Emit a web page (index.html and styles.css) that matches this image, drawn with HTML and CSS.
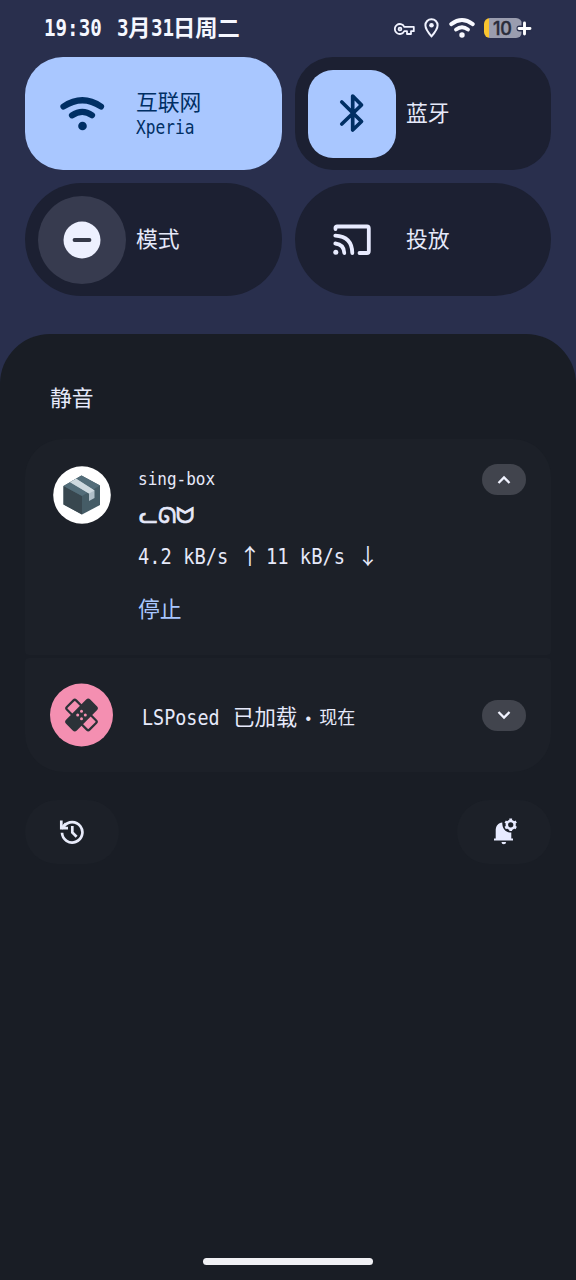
FILE: index.html
```html
<!DOCTYPE html>
<html lang="zh-CN">
<head>
<meta charset="utf-8">
<title>通知栏</title>
<link rel="stylesheet" href="styles.css">
</head>
<body>
<div class="screen">
  <header class="status">
    <div class="clock"><span class="mono n5">19:30</span><span class="date"><span class="mono n1">3</span>月<span class="mono n2">31</span>日周二</span></div>
    <div class="status-icons">
      <svg class="key" width="21" height="14" viewBox="0 0 21 14" fill="none" stroke="#f1f3ff" stroke-width="1.8" stroke-linejoin="round"><path d="M10.3 4.8A5 5 0 1 0 10.3 9.2H13v2.8h4V9.2h2.8V4.8Z"/><circle cx="6" cy="7" r="1.4"/></svg>
      <svg class="pin" width="15" height="20" viewBox="0 0 15 20"><path d="M7.5 1.2A6 6 0 0 0 1.4 7.3C1.4 11.5 7.5 18.3 7.5 18.3S13.6 11.5 13.6 7.3A6 6 0 0 0 7.5 1.2Z" fill="none" stroke="#f1f3ff" stroke-width="2"/><circle cx="7.5" cy="7.2" r="2.3" fill="#f1f3ff"/></svg>
      <svg class="wifi-small" width="26" height="20" viewBox="0 0 46 35"><g fill="none" stroke="#f8f9ff" stroke-width="7" stroke-linecap="round"><path d="M4 10.500Q23-3.500 42 10.500"/><path d="M12.500 20.200Q23 12.500 33.500 20.200"/></g><circle cx="23" cy="30" r="4.800" fill="#f8f9ff"/></svg>
      <div class="battery"><span class="level">10</span>
        <svg class="plus" width="17" height="17" viewBox="0 0 17 17" fill="none" stroke-linecap="round"><path d="M8.500 3.500v10M3.500 8.500h10" stroke="#292f4c" stroke-width="6"/><path d="M8.500 3v11M3 8.500h11" stroke="#fff" stroke-width="2.900"/></svg>
      </div>
    </div>
  </header>

  <section class="tiles">
    <div class="tile on">
      <div class="tile-icon"><svg width="46" height="35" viewBox="0 0 46 35"><g fill="none" stroke="#002f64" stroke-width="6.200" stroke-linecap="round"><path d="M4.500 10.500Q23.500-2 42 10.500"/><path d="M13 19.300Q23.500 12.500 33 19.300"/></g><circle cx="23.500" cy="30" r="4.300" fill="#002f64"/></svg></div>
      <div class="label two"><div>互联网</div><div class="sub"><span class="mono">Xperia</span></div></div>
    </div>
    <div class="tile">
      <div class="tile-icon lit"><svg width="26" height="40" viewBox="0 0 26 40" fill="none" stroke="#002f64" stroke-width="3.700" stroke-linejoin="round" stroke-linecap="round"><path d="M2.800 8 22.500 27.500 13.700 36V2L22.500 11 2.800 30"/></svg></div>
      <div class="label">蓝牙</div>
    </div>
    <div class="tile round">
      <div class="tile-icon dim"><svg width="38" height="38" viewBox="0 0 38 38"><circle cx="19" cy="19" r="18.500" fill="#edf0ff"/><path d="M11.500 19h15" stroke="#343849" stroke-width="3.800" stroke-linecap="round"/></svg></div>
      <div class="label">模式</div>
    </div>
    <div class="tile round">
      <div class="tile-icon"><svg width="38" height="32" viewBox="0 0 38 32" fill="none" stroke="#e8ebff" stroke-width="3.800" stroke-linecap="round" stroke-linejoin="round"><path d="M2.500 5V3.500Q2.500 2.500 4 2.500H34Q35.800 2.500 35.800 4.500V27Q35.800 29 34 29H26.500"/><path d="M2.300 11.700Q19 12.500 19.300 29M2.300 19.500Q11 20.500 11.300 29"/><circle cx="2.800" cy="28.300" r="2.500" fill="#e8ebff" stroke="none"/></svg></div>
      <div class="label">投放</div>
    </div>
  </section>

  <main class="shade">
    <h2>静音</h2>
    <article class="card first">
      <svg class="avatar" width="58" height="58" viewBox="0 0 58 58"><circle cx="29" cy="29" r="28.800" fill="#fff"/><path d="M10.500 20 28.500 9.500 47 19.500V39L29 48.500 10.500 38.500Z" fill="#455c66"/><path d="M10.500 20 29 30V48.500L10.500 38.500Z" fill="#38474f"/><path d="M10.500 20 28.500 9.500 47 19.500 29 30Z" fill="#536d79"/><path d="M17.200 16.200 23.200 12.700 41.500 24.500V32L36 35V27.500Z" fill="#b0bfc8"/><path d="M17.200 16.200 23.200 12.700 41.500 24.500 36 27.500Z" fill="#ced9df"/></svg>
      <div class="body">
        <div class="app"><span class="mono">sing-box</span></div>
        <div class="cat"><span>ᓚᘏᗢ</span></div>
        <div class="rate"><span class="mono n9">4.2 kB/s </span><span class="arrow">↑</span><span class="mono n8">11 kB/s </span><span class="arrow">↓</span></div>
        <div class="action">停止</div>
      </div>
      <div class="chevron"><svg width="14" height="10" viewBox="0 0 14 10"><path d="M1.500 8 7 2.500 12.500 8" fill="none" stroke="#f1f3ff" stroke-width="2.300"/></svg></div>
    </article>
    <article class="card second">
      <svg class="avatar" width="64" height="64" viewBox="0 0 64 64"><circle cx="31.500" cy="32" r="31.500" fill="#f48fb1"/><g transform="translate(31.500 32)" stroke="#2c3238" stroke-width="2.200"><rect x="-16" y="-6.500" width="32" height="13" rx="1.800" transform="rotate(45)" fill="#f48fb1"/><rect x="-16" y="-6.500" width="32" height="13" rx="1.800" transform="rotate(-45)" fill="#2c3238"/></g><g fill="#f48fb1"><circle cx="31.500" cy="28.200" r="1.500"/><circle cx="27.700" cy="32" r="1.500"/><circle cx="35.300" cy="32" r="1.500"/><circle cx="31.500" cy="35.800" r="1.500"/></g></svg>
      <div class="line"><span class="mono n8">LSPosed </span>已加载<span class="when"><span class="dot">•</span>现在</span></div>
      <div class="chevron"><svg width="14" height="10" viewBox="0 0 14 10"><path d="M1.500 2 7 7.500 12.500 2" fill="none" stroke="#f1f3ff" stroke-width="2.300"/></svg></div>
    </article>
    <footer class="actions">
      <div class="pill"><svg width="26" height="26" viewBox="0 0 26 26" fill="none" stroke="#e8ebfa" stroke-width="2.700"><path d="M3 13.800A10.200 10.200 0 1 0 5 7.200"/><path d="M2.300 1.500v7.700H9"/><path d="M2.300 9.500 7 4.500"/><path d="M13.300 7v6.500l4.300 4.300"/></svg></div>
      <div class="pill"><svg width="26" height="28" viewBox="0 0 26 28" fill="#e8ebff"><path d="M3 20.500H4.700V12.500C4.700 8 7.200 4.800 11.300 4.500 11 10.500 14.500 14.500 20.300 14.600V20.500H22V22.500H3Z"/><path d="M10.500 24h4.600a2.300 2.300 0 0 1-4.600 0Z"/><circle cx="19.700" cy="6.800" r="3.900" fill="none" stroke="#e8ebff" stroke-width="2.500"/><path d="M19.700.5v2M19.700 11.100v2M14.200 3.600l1.800 1M23.400 9l1.800 1M14.200 10l1.800-1M23.400 4.600l1.800-1" stroke="#e8ebff" stroke-width="2.800"/></svg></div>
    </footer>
    <div class="home-bar"></div>
  </main>
</div>
</body>
</html>
```
FILE: styles.css
```css
* { box-sizing: border-box; }
body { margin: 0; background: #191d25; }
svg { display: block; flex: none; }

.screen {
  width: 576px;
  height: 1280px;
  display: flex;
  flex-direction: column;
  overflow: hidden;
  background: #292f4d;
  color: #e6e9fa;
  font-family: "Liberation Sans", "Noto Sans CJK SC", sans-serif;
  font-size: 21.8px;
  line-height: 30px;
  white-space: nowrap;
}

/* Half-width Latin text set to half of a Chinese character */
.mono {
  display: inline-block;
  font-family: "DejaVu Sans Mono", monospace;
  font-size: 1em;
  white-space: pre;
  transform: scaleX(.86);
  transform-origin: 0 50%;
}
.n1 { width: 11.2px; }
.n2 { width: 22.4px; }
.n5 { width: 73px; }
.n8 { width: 91px; }
.n9 { width: 101px; }

/* Status bar */
.status {
  height: 57px;
  padding: 0 43px 0 44px;
  display: flex;
  align-items: center;
  justify-content: space-between;
  color: #f5f7ff;
}
.clock { display: flex; font-weight: 700; font-size: 22.3px; }
.clock .mono { font-size: 22.3px; }
.status-icons { display: flex; align-items: center; padding-bottom: 1px; }
.key { margin: 1px 9px 0 0; }
.pin { margin-right: 10px; }
.wifi-small { margin-right: 9px; }
.battery {
  position: relative;
  width: 38px;
  height: 20px;
  margin-right: 11px;
  border-radius: 6px;
  background: linear-gradient(90deg, #f9c52f 5px, #9a9daf 5px);
}
.level {
  display: block;
  padding-left: 9px;
  color: #292c3a;
  font: 500 18px/21px Inter, sans-serif;
  letter-spacing: -.2px;
  -webkit-text-stroke: .4px #292c3a;
}
.plus { position: absolute; left: 32px; top: 2px; }

/* Quick settings */
.tiles {
  display: grid;
  grid-template-columns: 257px 256px;
  grid-auto-rows: 113px;
  gap: 13px;
  padding: 0 25px;
  height: 277px;
}
.tile {
  display: flex;
  align-items: center;
  padding-left: 13px;
  border-radius: 38px;
  background: #1c2032;
}
.tile.round { border-radius: 57px; }
.tile.on { background: #a9c7ff; color: #002f64; }
.tile-icon {
  width: 88px;
  height: 88px;
  margin-right: 10px;
  display: flex;
  align-items: center;
  justify-content: center;
}
.lit { border-radius: 25px; background: #a9c7ff; }
.dim { border-radius: 50%; background: #373b4f; }
.label { padding-top: 1px; }
.two { line-height: 25px; padding-top: 2px; }
.sub { font-size: 18.6px; line-height: 25px; }

/* Notification shade */
.shade {
  flex: 1;
  display: flex;
  flex-direction: column;
  padding: 0 25px;
  border-radius: 50px 50px 0 0;
  background: #191d25;
}
h2 { margin: 50px 0 25px 25px; font-size: 21.8px; line-height: 30px; font-weight: 400; }
.card { display: flex; background: #1c2028; padding-right: 25px; }
.first { height: 216px; padding-top: 25px; padding-left: 28px; border-radius: 38px 38px 4px 4px; }
.second { height: 114px; margin-top: 3px; padding-left: 25px; align-items: center; border-radius: 4px 4px 38px 38px; }
.first .avatar { margin: 2px 27px 0 0; }
.second .avatar { margin-right: 28px; }
.body { flex: 1; }
.app { font-size: 18px; line-height: 29px; }
.app .mono { transform: scaleX(.89); }
.sub .mono { transform: scaleX(.87); }
.cat {
  height: 40px;
  padding: 2px 0 0 1px;
  font: 400 22px/40px "DejaVu Sans", sans-serif;
  -webkit-text-stroke: .7px #e6e9fa;
}
.rate { display: flex; height: 36px; line-height: 36px; padding-top: 5px; }
.arrow { width: 27px; line-height: 32px; text-indent: 0; font-family: "Noto Sans CJK SC", sans-serif; }
.action { margin-top: 25px; color: #a9c7ff; line-height: 30px; }
.chevron {
  width: 44px;
  height: 31px;
  border-radius: 16px;
  background: #41444d;
  display: flex;
  align-items: center;
  justify-content: center;
}
.line { flex: 1; display: flex; font-size: 21.4px; padding-top: 6px; }
.when { font-size: 18px; }
.dot { display: inline-block; width: 22px; text-align: center; font-size: 16px; }
.actions { display: flex; justify-content: space-between; margin-top: 28px; }
.pill {
  width: 94px;
  height: 64px;
  border-radius: 32px;
  background: #1c2028;
  display: flex;
  align-items: center;
  justify-content: center;
}
.home-bar {
  width: 170px;
  height: 7px;
  margin: auto auto 15px;
  border-radius: 4px;
  background: #f0f0f4;
}
```
